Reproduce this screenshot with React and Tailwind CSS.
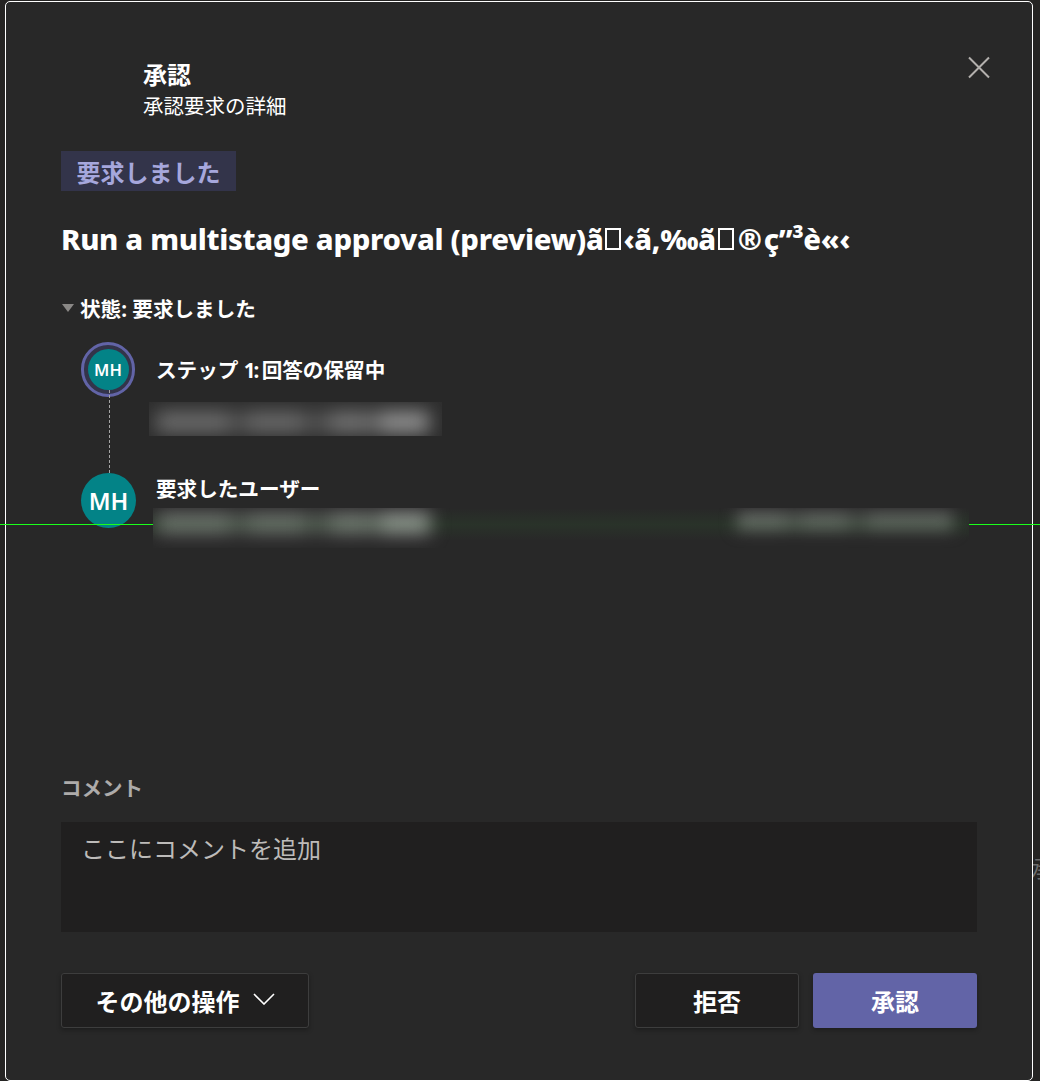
import clsx from 'clsx'

// The flow name arrives mis-encoded; null entries are the unprintable bytes
const TITLE_PARTS = ['ã', null, '‹ã‚‰ã', null, '®', 'ç”³è«‹']

function MissingGlyph() {
  return <span className="inline-block w-[16px] h-[22px] mx-[2px] border-2 border-white align-baseline" />
}

function Avatar({ initials, active }) {
  if (active) {
    return (
      <div className="w-[54px] h-[55px] rounded-full border-[3px] border-[#6264a7] bg-[#33344a] flex items-center justify-center">
        <div className="w-[41px] h-[41px] rounded-full bg-[#038387] flex items-center justify-center text-[16.5px] leading-[22px] pt-px font-semibold">
          {initials}
        </div>
      </div>
    )
  }
  return (
    <div className="w-[55px] h-[55px] rounded-full bg-[#038387] flex items-center justify-center text-[23.5px] leading-[30px] pt-px font-semibold">
      {initials}
    </div>
  )
}

function Button({ primary, className, children }) {
  return (
    <button
      className={clsx(
        'h-[55px] rounded-[3px] text-[24px] font-bold flex items-center justify-center shadow-[0_2px_5px_rgba(0,0,0,0.3)]',
        primary ? 'bg-[#6264a7]' : 'bg-[#201f1f] border border-[#3d3d3d]',
        className
      )}
    >
      {children}
    </button>
  )
}

// Blurred user name
function HiddenName({ className }) {
  return (
    <div className={clsx('flex shrink-0 items-center h-[22px] blur-[9px]', className)}>
      <div className="w-[72px] h-full bg-[#6a6a6a]" />
      <div className="w-[20px] h-full bg-[#505050]" />
      <div className="w-[54px] h-full bg-[#686868]" />
      <div className="w-[28px] h-full bg-[#505050]" />
      <div className="w-[38px] h-full bg-[#707070]" />
      <div className="w-[12px] h-full bg-[#626262]" />
      <div className="w-[49px] h-full bg-[#8e8e8e]" />
    </div>
  )
}

export default function App() {
  return (
    <div className="relative w-[1040px] h-[1081px] overflow-hidden bg-[#252423] pt-px pl-[5px] text-white font-['Noto_Sans','Noto_Sans_CJK_JP',sans-serif]">
      <div className="absolute left-[1031px] top-[854px] text-[23px] leading-[26px] text-[#6b6b6b] whitespace-nowrap font-['Noto_Sans_CJK_JP',sans-serif]">承</div>

      <div className="relative w-[1028px] h-[1080px] rounded-[5px] border border-white bg-[#282828] px-[55px] flex flex-col">
        <header className="h-[149px] shrink-0 flex justify-between pl-[82px] font-['Noto_Sans_CJK_JP',sans-serif]">
          <div className="pt-[56px]">
            <h1 className="text-[24px] leading-[32px] font-bold">承認</h1>
            <p className="text-[20.5px] leading-[30px]">承認要求の詳細</p>
          </div>
          <button className="w-[24px] h-[24px] mt-[53px] -mr-[14px]">
            <svg width="24" height="24" viewBox="0 0 24 24" fill="none" stroke="#b3b0ad" strokeWidth="2">
              <path d="M2 2.5L22 22.5M22 2.5L2 22.5" />
            </svg>
          </button>
        </header>

        <div className="w-[175px] h-[40px] shrink-0 bg-[#33344a] text-[#a6a7dc] text-[24px] leading-[42px] font-bold pl-[15.5px] whitespace-nowrap font-['Noto_Sans_CJK_JP',sans-serif]">
          要求しました
        </div>

        <h2 className="mt-[27px] h-[42px] shrink-0 text-[29.25px] leading-[42px] font-extrabold tracking-[-0.31px] whitespace-nowrap font-['Noto_Sans',sans-serif]">
          <span>Run a multistage approval (preview)</span>
          {TITLE_PARTS.map((part, i) =>
            part === null ? <MissingGlyph key={i} /> : <span key={i} className={part === '®' ? 'mx-[2px]' : undefined}>{part}</span>
          )}
        </h2>

        <div className="mt-[33px] h-[32px] shrink-0 flex items-center text-[20.6px] font-bold">
          <svg width="12" height="8" viewBox="0 0 12 8" className="mr-[6px] ml-px -mt-[3px]">
            <path d="M0 0H12L6 8Z" fill="#8a8886" />
          </svg>
          <span className="whitespace-nowrap">状態: 要求しました</span>
        </div>

        <div className="flex mt-[17px] pl-[20px] h-[203px] shrink-0">
          <div className="w-[55px] shrink-0 flex flex-col text-white">
            <Avatar initials="MH" active />
            <div className="relative z-10 -mt-[7px] h-[83px] ml-[28px] w-px bg-[repeating-linear-gradient(to_bottom,#a5a5a5_0_3px,transparent_3px_5px)]" />
            <Avatar initials="MH" />
          </div>
          <div className="min-w-0 flex-1">
            <div className="ml-[20px] h-[54px] leading-[56px] text-[20.6px] font-bold">
              ステップ <span className="tracking-[-2px] mr-px">1:</span> <span className="-ml-[2px]">回答の保留中</span>
            </div>
            <div className="ml-[13px] mt-[6px] w-[293px] h-[34px] overflow-hidden bg-[#2d2d2d]">
              <HiddenName className="mt-[9px] ml-[7px]" />
            </div>
            <div className="ml-[20px] mt-[37px] h-[32px] leading-[32px] text-[20.6px] font-bold">要求したユーザー</div>
            <div className="relative z-20 ml-[17px] mt-[3px] w-[816px] h-[40px] overflow-hidden bg-[#282828]">
              <div className="h-[40px] flex items-start">
                <HiddenName className="mt-[4px] ml-[4px]" />
                <div className="ml-[307px] mt-[4px] flex h-[18px] blur-[8px]">
                  <div className="w-[48px] bg-[#666]" />
                  <div className="w-[18px] bg-[#525252]" />
                  <div className="w-[44px] bg-[#626262]" />
                  <div className="w-[22px] bg-[#4a4a4a]" />
                  <div className="w-[84px] bg-[#606060]" />
                </div>
              </div>
              <div className="absolute inset-x-0 top-0 h-[33px] bg-linear-to-b from-[#44ff44]/0 via-[#44ff44]/5 to-[#44ff44]/0" />
            </div>
          </div>
        </div>

        <label className="mt-[226px] h-[32px] shrink-0 text-[20.5px] leading-[32px] font-bold text-[#adabaa] font-['Noto_Sans_CJK_JP',sans-serif]">
          コメント
        </label>
        <textarea
          className="mt-[19px] w-[916px] h-[110px] shrink-0 resize-none bg-[#201f1f] px-[20px] py-[8px] text-[24px] leading-[36px] placeholder-[#bdbbb9] outline-none font-['Noto_Sans_CJK_JP',sans-serif]"
          placeholder="ここにコメントを追加"
        />

        <footer className="mt-[41px] shrink-0 flex font-['Noto_Sans_CJK_JP',sans-serif]">
          <Button className="w-[248px]">
            その他の操作
            <svg width="22" height="12" viewBox="0 0 22 12" fill="none" stroke="white" strokeWidth="1.6" className="ml-[13px] -mt-[3px]">
              <path d="M1 1L11 11L21 1" />
            </svg>
          </Button>
          <Button className="w-[164px] ml-auto">拒否</Button>
          <Button primary className="w-[164px] ml-[14px]">承認</Button>
        </footer>
      </div>

      <div className="absolute left-0 top-[524px] z-10 w-full h-px bg-[#1aff1a]" />
    </div>
  )
}
